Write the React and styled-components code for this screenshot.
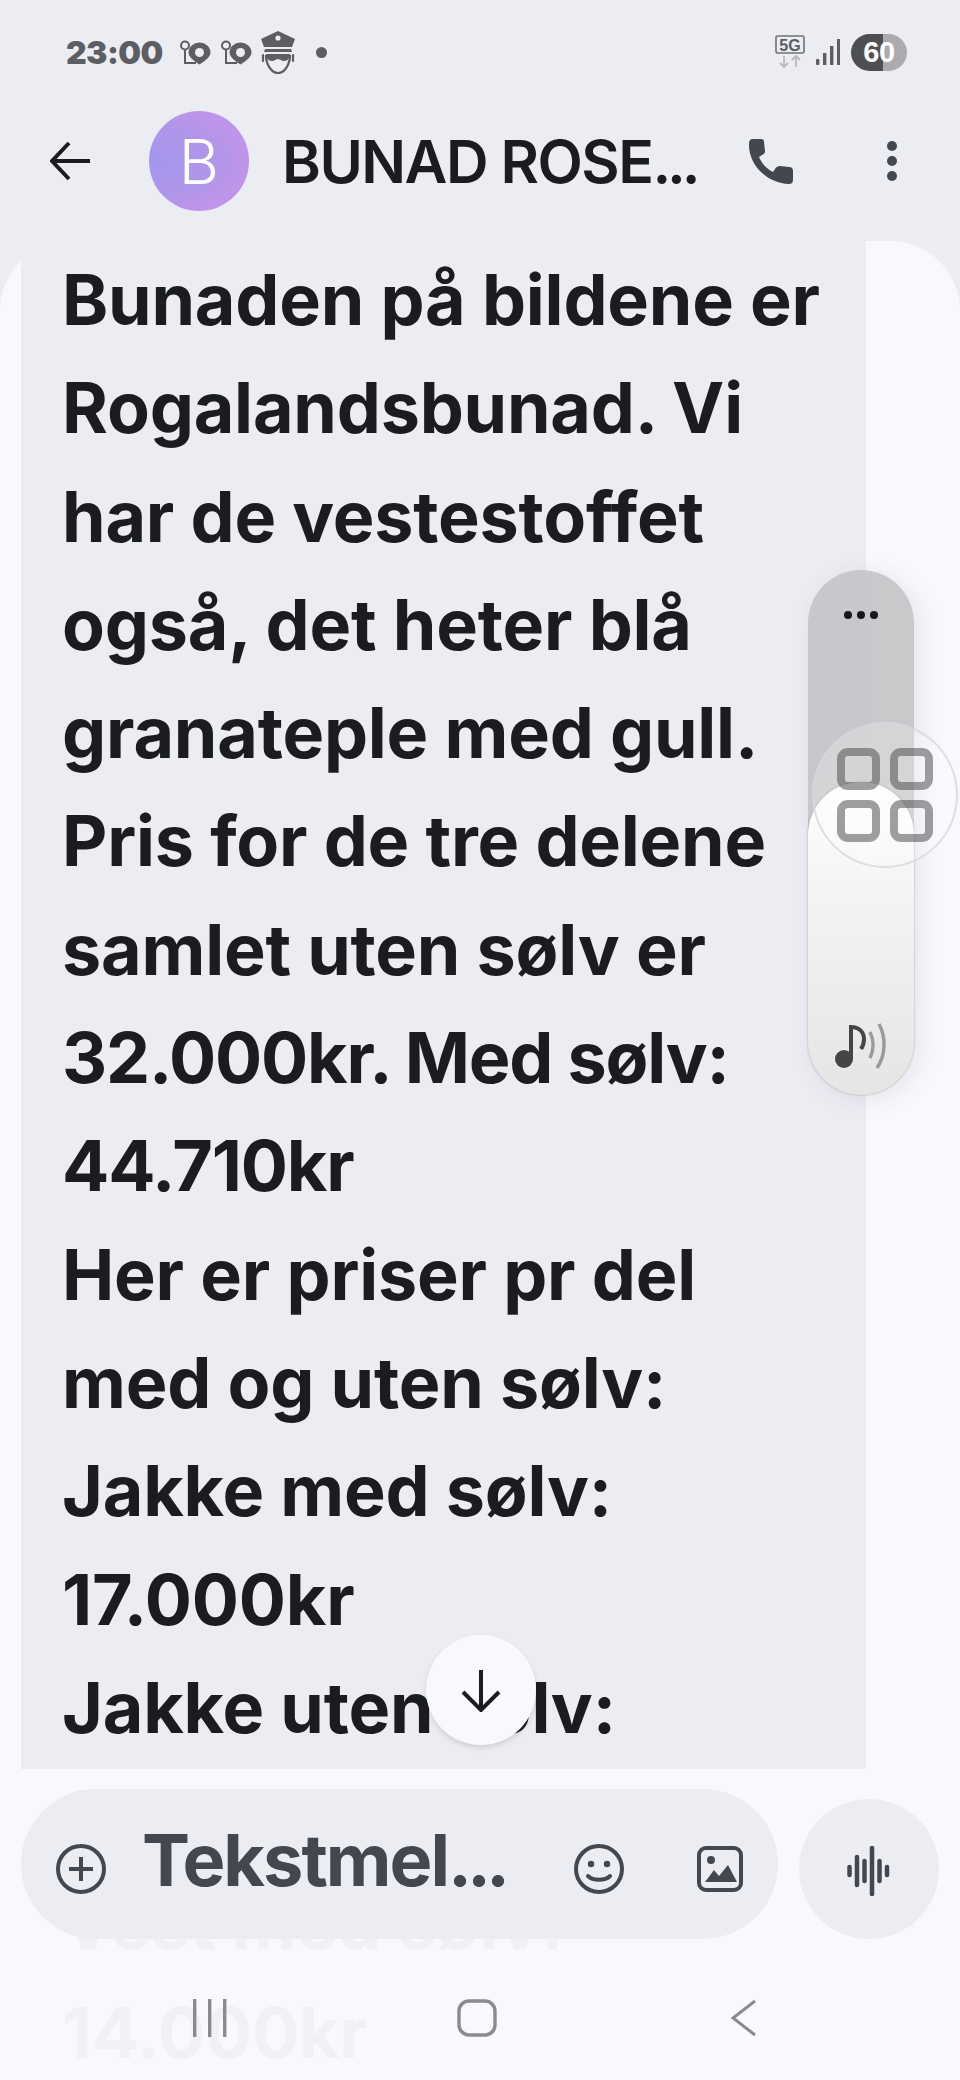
import React from "react";
import styled, { createGlobalStyle } from "styled-components";

const GlobalStyle = createGlobalStyle`
  html, body {
    margin: 0;
    padding: 0;
    background: #ecedf3;
  }
  * {
    box-sizing: border-box;
  }
`;

const Screen = styled.div`
  position: relative;
  width: 960px;
  height: 2080px;
  overflow: hidden;
  background: #ecedf3;
  font-family: Inter, "Noto Sans", sans-serif;
  color: #1a1c22;
`;

const StatusBar = styled.div`
  display: flex;
  align-items: center;
  height: 104px;
  padding: 0 53px 0 66px;
  color: #5c5e63;
`;

const Time = styled.span`
  width: 96px;
  font-size: 32px;
  font-weight: 900;
  letter-spacing: -0.6px;
  margin-right: 17px;
`;

const StatusIcons = styled.div`
  display: flex;
  align-items: center;
  gap: 9px;
  flex: 1;
`;

const StatusDot = styled.span`
  width: 11px;
  height: 11px;
  border-radius: 50%;
  background: #5c5e63;
  margin-left: 12px;
`;

const StatusRight = styled.div`
  display: flex;
  align-items: center;
  gap: 11px;
`;

const Battery = styled.div`
  width: 56px;
  height: 37px;
  border-radius: 19px;
  overflow: hidden;
  display: flex;
  align-items: center;
  justify-content: center;
  background: linear-gradient(90deg, #4e4f52 58%, #ababad 58%);
  color: #fff;
  font-size: 29px;
  font-weight: 700;
  letter-spacing: -0.5px;
  font-family: "Liberation Sans", sans-serif;
`;

const Header = styled.div`
  display: flex;
  align-items: center;
  height: 137px;
  padding: 0 0 23px 50px;
`;

const BackButton = styled.div`
  display: flex;
  width: 40px;
  margin-right: 59px;
`;

const Avatar = styled.div`
  width: 100px;
  height: 100px;
  flex: none;
  border-radius: 50%;
  display: flex;
  align-items: center;
  justify-content: center;
  background: radial-gradient(ellipse 100% 55% at 0% 50%, #a595ee 0%, #b196ea 70%, #bf95e9 100%);
  color: #fff;
  font-size: 62px;
  font-weight: 300;
  margin-right: 33px;
`;

const Title = styled.div`
  width: 466px;
  font-size: 59px;
  font-weight: 600;
  letter-spacing: -1.5px;
  white-space: nowrap;
  color: #1a1c22;
`;

const Dots = styled.span`
  letter-spacing: -0.07em;
`;

const HeaderActions = styled.div`
  display: flex;
  align-items: center;
  gap: 93px;
`;

const Sheet = styled.div`
  height: 1839px;
  background: #f7f9fe;
  border-radius: 70px 70px 0 0;
  overflow: hidden;
  padding-left: 21px;
`;

const Bubble = styled.div`
  width: 845px;
  height: 1839px;
  background: #ecedf3;
  padding: 5px 0 0 41px;
`;

const Line = styled.div`
  font-size: 70px;
  font-weight: 700;
  line-height: 108.3px;
  letter-spacing: ${(p) => (p.$tight ? "-1.2px" : "-0.2px")};
  white-space: nowrap;
`;

const SidePanel = styled.div`
  position: absolute;
  left: 808px;
  top: 570px;
  width: 106px;
  height: 525px;
  border-radius: 53px;
  background: rgba(198, 198, 201, 0.95);
  box-shadow: 6px 4px 24px rgba(60, 60, 70, 0.1);
  display: flex;
  justify-content: center;
  padding-top: 41px;
`;

const PanelDots = styled.div`
  display: flex;
  gap: 5px;
  height: 8px;
`;

const PanelDot = styled.span`
  width: 8px;
  height: 8px;
  border-radius: 50%;
  background: #17181b;
`;

const PanelLower = styled.div`
  position: absolute;
  left: 0;
  right: 0;
  bottom: 0;
  height: 313px;
  border-radius: 53px;
  background: linear-gradient(180deg, #ffffff 0%, #f4f4f4 35%, #e5e5e6 100%);
  box-shadow: 0 0 2px rgba(90, 90, 95, 0.5);
  display: flex;
  align-items: flex-end;
  justify-content: center;
  padding-bottom: 26px;
`;

const GridBubble = styled.div`
  position: absolute;
  left: 812px;
  top: 722px;
  width: 146px;
  height: 146px;
  border-radius: 50%;
  border: 2px solid rgba(215, 215, 220, 0.8);
  background: rgba(255, 255, 255, 0.22);
  display: grid;
  grid-template-columns: 43px 43px;
  grid-template-rows: 42px 42px;
  gap: 10px;
  align-content: center;
  justify-content: center;
`;

const GridCell = styled.span`
  border: 8px solid rgba(80, 80, 82, 0.55);
  border-radius: 11px;
`;

const ScrollDown = styled.div`
  position: absolute;
  left: 426px;
  top: 1635px;
  width: 110px;
  height: 110px;
  border-radius: 50%;
  background: #f8f9fe;
  box-shadow: 0 3px 5px rgba(40, 40, 50, 0.14);
  display: flex;
  align-items: center;
  justify-content: center;
  z-index: 2;
`;

const BottomArea = styled.div`
  position: absolute;
  left: 0;
  right: 0;
  top: 1769px;
  bottom: 0;
  background: rgba(247, 249, 254, 0.97);
  padding: 20px 21px 0;
`;

const ComposerRow = styled.div`
  display: flex;
  align-items: flex-end;
  gap: 21px;
`;

const Composer = styled.div`
  width: 757px;
  height: 150px;
  border-radius: 75px;
  background: #ecedf3;
  display: flex;
  align-items: center;
  padding: 10px 0 0 35px;
  color: #44474f;
`;

const Placeholder = styled.div`
  width: 432px;
  margin-left: 36px;
  margin-top: -20px;
  font-size: 72px;
  font-weight: 700;
  letter-spacing: -2px;
  white-space: nowrap;
`;

const ComposerIcons = styled.div`
  display: flex;
  align-items: center;
  gap: 73px;
`;

const VoiceButton = styled.div`
  width: 140px;
  height: 140px;
  border-radius: 50%;
  background: #ecedf3;
  display: flex;
  align-items: center;
  justify-content: center;
  padding-top: 3px;
`;

const NavBar = styled.div`
  display: grid;
  grid-template-columns: repeat(3, 267px);
  justify-content: center;
  justify-items: center;
  padding-right: 6px;
  margin-top: 60px;
`;

const lines = [
  { text: "Bunaden på bildene er" },
  { text: "Rogalandsbunad. Vi" },
  { text: "har de vestestoffet" },
  { text: "også, det heter blå" },
  { text: "granateple med gull." },
  { text: "Pris for de tre delene" },
  { text: "samlet uten sølv er" },
  { text: "32.000kr. Med sølv:", tight: true },
  { text: "44.710kr", tight: true },
  { text: "Her er priser pr del" },
  { text: "med og uten sølv:" },
  { text: "Jakke med sølv:" },
  { text: "17.000kr" },
  { text: "Jakke uten sølv:" },
  { text: "12.000kr" },
  { text: "Vest med sølv:" },
  { text: "14.000kr" },
];

// status bar drawings
const RouteIcon = () => (
  <svg width="32" height="25" viewBox="0 0 32 25" fill="none">
    <circle cx="6" cy="5.5" r="4" stroke="#5c5e63" strokeWidth="2" />
    <path d="M6 10v13h11" stroke="#5c5e63" strokeWidth="2" />
    <path
      d="M20.5.5A11 11 0 0 1 31.5 11.5c0 5-6 9.5-11 13-5-3.5-11-8-11-13A11 11 0 0 1 20.5.5z"
      fill="#5c5e63"
      transform="translate(0 2) scale(1 .92)"
    />
    <circle cx="20.5" cy="12.5" r="4.5" fill="#ecedf3" />
  </svg>
);

const PoliceIcon = () => (
  <svg width="34" height="43" viewBox="0 0 34 43">
    <path d="M0 8 17 0l17 8-3 8H3z" fill="#5c5e63" />
    <circle cx="17" cy="7" r="2.6" fill="#ecedf3" />
    <path d="M4 18h26l1 3H3z" fill="#5c5e63" />
    <path d="M5 24c0 9 5 18 12 18s12-9 12-18" fill="none" stroke="#5c5e63" strokeWidth="2.2" />
    <path d="M5 23h24l-1 4c-1 3-6 4-8 2l-3-1-3 1c-2 2-7 1-8-2z" fill="#5c5e63" />
    <path d="M2 24v6M32 24v6" stroke="#5c5e63" strokeWidth="2.2" strokeLinecap="round" />
  </svg>
);

const FiveGIcon = () => (
  <svg width="30" height="34" viewBox="0 0 30 34" fill="none">
    <rect x="1" y="1" width="28" height="17" rx="1.5" stroke="#6f7175" strokeWidth="1.6" />
    <text x="15" y="15.5" textAnchor="middle" fontSize="16" fontWeight="700" fill="#5c5e63" fontFamily="Liberation Sans">5G</text>
    <path d="M9 21v11M5 28l4 4 4-4M21 32V21M17 25l4-4 4 4" stroke="#b9babd" strokeWidth="1.8" />
  </svg>
);

const SignalIcon = () => (
  <svg width="24" height="26" viewBox="0 0 24 26" fill="#5c5e63">
    <rect x="0" y="20" width="3.4" height="6" rx="1" />
    <rect x="7" y="14" width="3.4" height="12" />
    <rect x="14" y="7" width="3.4" height="19" />
    <rect x="21" y="0" width="3" height="26" />
  </svg>
);

const Chevron = () => (
  <svg width="26" height="38" viewBox="0 0 26 38" fill="none">
    <path d="M24 2 2 19l22 17" stroke="#8a8b8f" strokeWidth="3" />
  </svg>
);

const App = () => {
  return (
    <Screen>
      <GlobalStyle />
      <StatusBar>
        <Time>23:00</Time>
        <StatusIcons>
          <RouteIcon />
          <RouteIcon />
          <PoliceIcon />
          <StatusDot />
        </StatusIcons>
        <StatusRight>
          <FiveGIcon />
          <SignalIcon />
          <Battery>60</Battery>
        </StatusRight>
      </StatusBar>

      <Header>
        <BackButton>
          <svg width="40" height="40" viewBox="0 0 40 40" fill="none">
            <path d="M40 20H3M19 2 2 20l17 18" stroke="#1a1c22" strokeWidth="4" />
          </svg>
        </BackButton>
        <Avatar>B</Avatar>
        <Title>
          BUNAD ROSE<Dots>...</Dots>
        </Title>
        <HeaderActions>
          <svg width="46" height="46" viewBox="0 0 46 46">
            <path
              d="M1 5c0-2 1-4 4-4h8c2 0 3 1 3 3l1 9c0 2-1 3-3 4l-3 2c3 7 8 12 14 15l2-3c1-2 3-3 5-3l9 1c3 0 4 2 4 4v9c0 3-2 4-4 4C19 45 0 27 1 5z"
              fill="#44474f"
            />
          </svg>
          <svg width="10" height="40" viewBox="0 0 10 40" fill="#44474f">
            <circle cx="5" cy="5" r="5" />
            <circle cx="5" cy="20" r="5" />
            <circle cx="5" cy="35" r="5" />
          </svg>
        </HeaderActions>
      </Header>

      <Sheet>
        <Bubble>
          {lines.map((line) => (
            <Line key={line.text} $tight={line.tight}>
              {line.text}
            </Line>
          ))}
        </Bubble>
      </Sheet>

      <SidePanel>
        <PanelDots>
          <PanelDot />
          <PanelDot />
          <PanelDot />
        </PanelDots>
        <PanelLower>
          <svg width="56" height="46" viewBox="0 0 56 46" fill="none">
            <circle cx="11" cy="36" r="9" fill="#454547" />
            <path d="M18 36V4c8 0 13 5 13 12 0 4-1 7-3 10" stroke="#454547" strokeWidth="4" />
            <path d="M37 9c4 8 4 18 0 26" stroke="#9a9a9c" strokeWidth="3.5" />
            <path d="M46 1c7 13 7 31-2 44" stroke="#9a9a9c" strokeWidth="3.5" />
          </svg>
        </PanelLower>
      </SidePanel>

      <GridBubble>
        <GridCell />
        <GridCell />
        <GridCell />
        <GridCell />
      </GridBubble>

      <ScrollDown>
        <svg width="42" height="44" viewBox="0 0 42 44" fill="none">
          <path d="M21 2v38M3 24l18 18 18-18" stroke="#1a1c22" strokeWidth="4" />
        </svg>
      </ScrollDown>

      <BottomArea>
        <ComposerRow>
          <Composer>
            <svg width="50" height="50" viewBox="0 0 50 50" fill="none">
              <circle cx="25" cy="25" r="23" stroke="#44474f" strokeWidth="4" />
              <path d="M25 13v24M13 25h24" stroke="#44474f" strokeWidth="4" />
            </svg>
            <Placeholder>
              Tekstmel<Dots>...</Dots>
            </Placeholder>
            <ComposerIcons>
              <svg width="50" height="50" viewBox="0 0 50 50" fill="none">
                <circle cx="25" cy="25" r="23" stroke="#44474f" strokeWidth="4" />
                <circle cx="17" cy="20" r="3.2" fill="#44474f" />
                <circle cx="33" cy="20" r="3.2" fill="#44474f" />
                <path d="M14 32c5 5 17 5 22 0" stroke="#44474f" strokeWidth="4" strokeLinecap="round" />
              </svg>
              <svg width="46" height="46" viewBox="0 0 46 46" fill="none">
                <rect x="2" y="2" width="42" height="42" rx="7" stroke="#44474f" strokeWidth="4" />
                <circle cx="14" cy="14" r="4" fill="#44474f" />
                <path d="M8 36 17 24l5 6 9-11 9 17z" fill="#44474f" />
              </svg>
            </ComposerIcons>
          </Composer>
          <VoiceButton>
            <svg width="44" height="50" viewBox="0 0 44 50" stroke="#44474f" strokeWidth="4.5" strokeLinecap="round" fill="none">
              <path d="M2.500 21v8M10 11v28M17.500 15v20M25 2v46M32.500 15v20M40 21v8" />
            </svg>
          </VoiceButton>
        </ComposerRow>
        <NavBar>
          <svg width="36" height="38" viewBox="0 0 36 38" fill="#8a8b8f">
            <rect x="1" y="0" width="3.4" height="38" />
            <rect x="16" y="0" width="3.4" height="38" />
            <rect x="31" y="0" width="3.4" height="38" />
          </svg>
          <svg width="40" height="38" viewBox="0 0 40 38" fill="none">
            <rect x="2" y="2" width="36" height="34" rx="10" stroke="#8a8b8f" strokeWidth="3.4" />
          </svg>
          <Chevron />
        </NavBar>
      </BottomArea>
    </Screen>
  );
};

export default App;
